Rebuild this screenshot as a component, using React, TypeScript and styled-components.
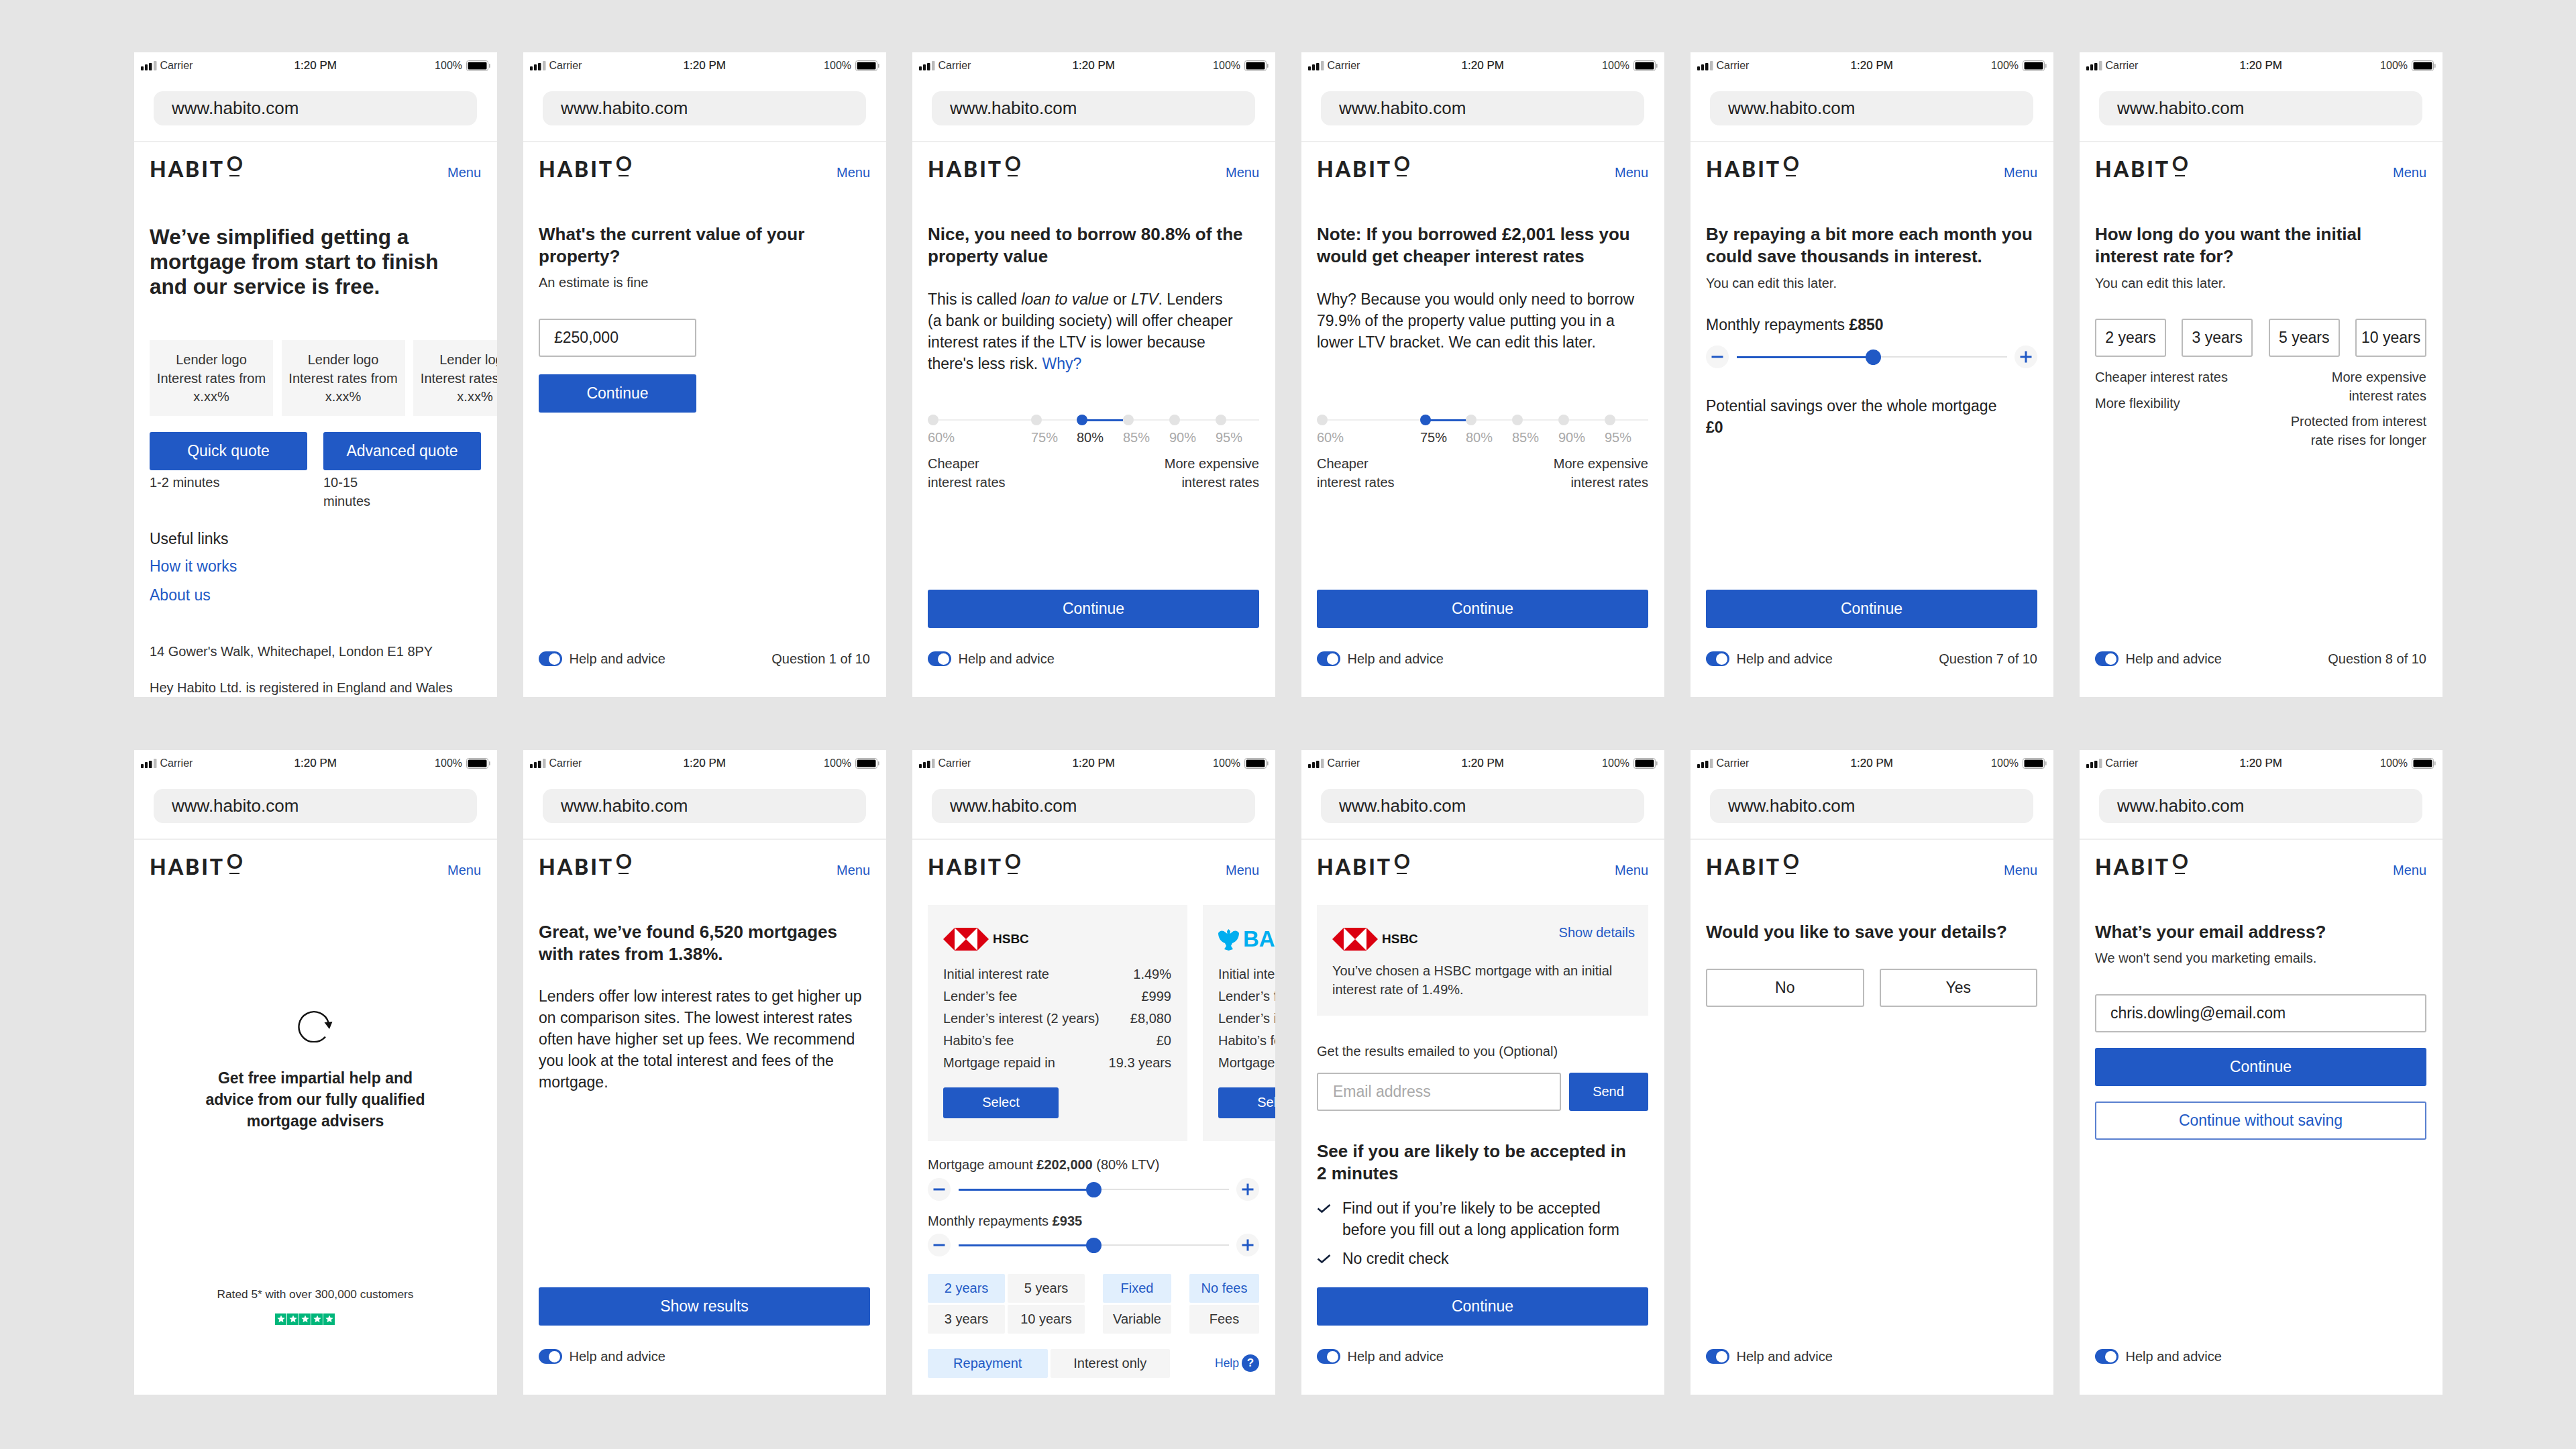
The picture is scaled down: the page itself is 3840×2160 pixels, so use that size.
import React from "react";
import styled, { createGlobalStyle } from "styled-components";

const BLUE = "#2159c5";
const INK = "#222";

const Global = createGlobalStyle`
  html, body { margin: 0; padding: 0; background: #e5e5e5; }
  body { font-family: "Liberation Sans", Arial, sans-serif; color: ${INK}; }
  * { box-sizing: border-box; }
`;

const Board = styled.div`
  display: grid;
  grid-template-columns: repeat(6, 541px);
  grid-auto-rows: 961px;
  column-gap: 39px;
  row-gap: 79px;
  padding: 78px 199px 81px 200px;
  width: 3840px;
  height: 2160px;
  overflow: hidden;
  background: #e5e5e5;
`;

const ScreenFrame = styled.section`
  display: flex;
  flex-direction: column;
  background: #fff;
  overflow: hidden;
`;

/* ---------- phone chrome ---------- */
const StatusBar = styled.div`
  display: grid;
  grid-template-columns: 1fr auto 1fr;
  align-items: center;
  height: 40px;
  padding: 0 10px 0 9.5px;
  font-size: 16px;
  color: #333;
`;
const StatusLeft = styled.div`
  display: flex;
  align-items: center;
  gap: 5px;
`;
const StatusRight = styled.div`
  display: flex;
  align-items: center;
  justify-content: flex-end;
  gap: 6px;
`;
const Clock = styled.div`
  font-size: 17px;
  color: #222;
  -webkit-text-stroke: 0.2px #222;
`;
const UrlWrap = styled.div`
  padding: 18px 30px 23px 29px;
  border-bottom: 2px solid #eee;
`;
const UrlBar = styled.div`
  height: 51px;
  display: flex;
  align-items: center;
  padding-left: 27px;
  border-radius: 14px;
  background: #f0f0f0;
  font-size: 26px;
  color: #222;
`;
const Header = styled.header`
  height: 68px;
  display: flex;
  justify-content: space-between;
  align-items: flex-start;
  padding: 21px 24px 0 23px;
`;
const Logo = styled.div`
  display: flex;
  align-items: flex-end;
  height: 30px;
  gap: 4px;
  font-family: "Lato", "Liberation Sans", sans-serif;
  font-weight: 900;
  color: #222;
`;
const LogoWord = styled.span`
  font-size: 32px;
  line-height: 23px;
  letter-spacing: 2.9px;
`;
const LogoO = styled.span`
  display: flex;
  flex-direction: column;
  align-items: center;
  width: 22px;
  font-size: 30px;
  line-height: 20px;
  font-weight: 700;
  &::after {
    content: "";
    width: 15px;
    height: 2.5px;
    margin-top: 8px;
    background: #222;
  }
`;
const MenuLink = styled.a`
  margin-top: 12px;
  font-size: 20px;
  line-height: 24px;
  color: ${BLUE};
`;

const Main = styled.main`
  flex: 1;
  min-height: 0;
  display: flex;
  flex-direction: column;
  padding: 0 24px 0 23px;
`;

/* ---------- text ---------- */
const Hero = styled.h1<{ $mt: number }>`
  margin: ${(p) => p.$mt}px 0 0;
  font-size: 31.5px;
  line-height: 37px;
  font-weight: 700;
  color: ${INK};
`;
const Heading = styled.h2<{ $mt?: number }>`
  margin: ${(p) => p.$mt ?? 52.5}px 0 0;
  font-size: 26px;
  line-height: 33px;
  font-weight: 700;
  color: ${INK};
`;
const Small = styled.p<{ $mt?: number; $right?: boolean; $center?: boolean }>`
  margin: ${(p) => p.$mt ?? 0}px 0 0;
  font-size: 20px;
  line-height: 27.5px;
  color: #333;
  text-align: ${(p) => (p.$right ? "right" : p.$center ? "center" : "left")};
`;
const Body = styled.p<{ $mt?: number; $minH?: number }>`
  margin: ${(p) => p.$mt ?? 0}px 0 0;
  font-size: 23px;
  line-height: 32px;
  color: ${INK};
  min-height: ${(p) => p.$minH ?? 0}px;
`;
const TextLink = styled.a`
  color: ${BLUE};
`;

/* ---------- buttons / inputs ---------- */
const Primary = styled.button<{ $mt?: number; $w?: string; $h?: number; $size?: number }>`
  display: block;
  margin: ${(p) => p.$mt ?? 0}px 0 0;
  width: ${(p) => p.$w ?? "100%"};
  height: ${(p) => p.$h ?? 57}px;
  flex-shrink: 0;
  border: 0;
  border-radius: 3px;
  background: ${BLUE};
  color: #fff;
  font-family: inherit;
  font-size: ${(p) => p.$size ?? 23}px;
  padding: 0;
`;
const OutlineBlue = styled(Primary)`
  background: #fff;
  color: ${BLUE};
  border: 2px solid #5a80d0;
`;
const Choice = styled.button`
  height: 57px;
  border: 2px solid #bbb;
  border-radius: 3px;
  background: #fff;
  font-family: inherit;
  font-size: 23px;
  color: ${INK};
  padding: 0;
`;
const ChoiceRow = styled.div<{ $cols: number; $gap: number; $mt: number }>`
  display: grid;
  grid-template-columns: repeat(${(p) => p.$cols}, 1fr);
  gap: ${(p) => p.$gap}px;
  margin-top: ${(p) => p.$mt}px;
`;
const TextField = styled.div<{ $mt?: number; $w?: string; $muted?: boolean; $pad?: number }>`
  display: flex;
  align-items: center;
  margin-top: ${(p) => p.$mt ?? 0}px;
  width: ${(p) => p.$w ?? "100%"};
  height: 57px;
  padding-left: ${(p) => p.$pad ?? 21}px;
  border: 2px solid #bbb;
  border-radius: 3px;
  font-size: 23px;
  color: ${(p) => (p.$muted ? "#a9a9a9" : INK)};
`;

/* ---------- footer ---------- */
const Footer = styled.footer`
  margin-top: auto;
  padding-bottom: 45px;
`;
const HelpRow = styled.div`
  display: flex;
  align-items: center;
  justify-content: space-between;
  height: 24px;
  margin-top: 34px;
  font-size: 20px;
  color: #333;
`;
const HelpLeft = styled.div`
  display: flex;
  align-items: center;
  gap: 10.5px;
`;
const Toggle = styled.span`
  position: relative;
  display: block;
  width: 35px;
  height: 22px;
  border-radius: 11px;
  background: ${BLUE};
  &::after {
    content: "";
    position: absolute;
    top: 2.5px;
    right: 3px;
    width: 17px;
    height: 17px;
    border-radius: 50%;
    background: #fff;
  }
`;

function BottomBar({ label, question }: { label?: string; question?: string }) {
  return (
    <Footer>
      {label && <Primary>{label}</Primary>}
      <HelpRow>
        <HelpLeft>
          <Toggle />
          Help and advice
        </HelpLeft>
        {question && <span>{question}</span>}
      </HelpRow>
    </Footer>
  );
}

/* ---------- chrome wrapper ---------- */
function Signal() {
  return (
    <svg width="24" height="14" viewBox="0 0 24 14">
      <rect x="0" y="8" width="4" height="6" rx="1" fill="#111" />
      <rect x="6" y="5" width="4" height="9" rx="1" fill="#111" />
      <rect x="12" y="3" width="4.5" height="11" rx="1" fill="#111" />
      <rect x="19" y="0" width="4.5" height="14" rx="1" fill="#bbb" />
    </svg>
  );
}
function Battery() {
  return (
    <svg width="36" height="16" viewBox="0 0 36 16">
      <rect x="0.5" y="0.5" width="32" height="15" rx="3" fill="#fff" stroke="#aaa" />
      <rect x="2.5" y="2.5" width="28" height="11" rx="1.5" fill="#000" />
      <rect x="34" y="5" width="1.6" height="6" rx="0.8" fill="#aaa" />
    </svg>
  );
}

function Screen({ children }: { children: React.ReactNode }) {
  return (
    <ScreenFrame>
      <StatusBar>
        <StatusLeft>
          <Signal />
          Carrier
        </StatusLeft>
        <Clock>1:20 PM</Clock>
        <StatusRight>
          100%
          <Battery />
        </StatusRight>
      </StatusBar>
      <UrlWrap>
        <UrlBar>www.habito.com</UrlBar>
      </UrlWrap>
      <Header>
        <Logo>
          <LogoWord>HABIT</LogoWord>
          <LogoO>O</LogoO>
        </Logo>
        <MenuLink>Menu</MenuLink>
      </Header>
      <Main>{children}</Main>
    </ScreenFrame>
  );
}

/* ---------- LTV ticks ---------- */
const Ticks = styled.div`
  position: relative;
  display: grid;
  grid-template-columns: 154px 68px 69px 69px 69px 1fr;
  margin-top: 60px;
  &::before {
    content: "";
    position: absolute;
    left: 0;
    right: 0;
    top: 7px;
    height: 2px;
    background: #eee;
  }
`;
const Tick = styled.div<{ $on: boolean }>`
  position: relative;
  font-size: 20px;
  line-height: 27.5px;
  color: ${(p) => (p.$on ? "#333" : "#a9a9a9")};
  &::after {
    content: "";
    display: ${(p) => (p.$on ? "block" : "none")};
    position: absolute;
    left: 8px;
    top: 6.5px;
    width: 61px;
    height: 3px;
    background: ${BLUE};
  }
`;
const TickDot = styled.span<{ $on: boolean }>`
  position: relative;
  display: block;
  width: 16px;
  height: 16px;
  margin-bottom: 5px;
  border-radius: 50%;
  background: ${(p) => (p.$on ? BLUE : "#e3e3e3")};
`;
const CaptionRow = styled.div<{ $mt?: number }>`
  display: flex;
  justify-content: space-between;
  margin-top: ${(p) => p.$mt ?? 11.5}px;
`;

function LtvTicks({ active }: { active: string }) {
  return (
    <>
      <Ticks>
        {["60%", "75%", "80%", "85%", "90%", "95%"].map((t) => (
          <Tick key={t} $on={t === active}>
            <TickDot $on={t === active} />
            {t}
          </Tick>
        ))}
      </Ticks>
      <CaptionRow>
        <Small>
          Cheaper
          <br />
          interest rates
        </Small>
        <Small $right>
          More expensive
          <br />
          interest rates
        </Small>
      </CaptionRow>
    </>
  );
}

/* ---------- slider ---------- */
const SliderRow = styled.div<{ $mt: number }>`
  display: flex;
  align-items: center;
  gap: 11.5px;
  height: 34px;
  margin-top: ${(p) => p.$mt}px;
`;
const Stepper = styled.span`
  display: flex;
  align-items: center;
  justify-content: center;
  flex-shrink: 0;
  width: 34px;
  height: 34px;
  border-radius: 50%;
  background: #f5f5f5;
`;
const Track = styled.div`
  position: relative;
  flex: 1;
  height: 2px;
  background: #e2e2e2;
`;
const Fill = styled.div`
  position: absolute;
  left: 0;
  top: -0.5px;
  height: 3px;
  background: ${BLUE};
`;
const Knob = styled.div`
  position: absolute;
  top: -10.5px;
  width: 23px;
  height: 23px;
  margin-left: -11.5px;
  border-radius: 50%;
  background: ${BLUE};
`;

function Slider({ pct, mt }: { pct: number; mt: number }) {
  return (
    <SliderRow $mt={mt}>
      <Stepper>
        <svg width="18" height="4" viewBox="0 0 18 4">
          <rect x="0.5" y="0.5" width="17" height="3" fill={BLUE} />
        </svg>
      </Stepper>
      <Track>
        <Fill style={{ width: `${pct}%` }} />
        <Knob style={{ left: `${pct}%` }} />
      </Track>
      <Stepper>
        <svg width="18" height="18" viewBox="0 0 18 18">
          <rect x="0.5" y="7.5" width="17" height="3" fill={BLUE} />
          <rect x="7.5" y="0.5" width="3" height="17" fill={BLUE} />
        </svg>
      </Stepper>
    </SliderRow>
  );
}

/* ---------- lender parts ---------- */
const LogoRow = styled.div`
  display: flex;
  align-items: center;
  gap: 6px;
  height: 34px;
`;
const LenderName = styled.span`
  font-size: 19px;
  font-weight: 700;
  color: #111;
`;
const BrandName = styled.span`
  font-size: 33px;
  font-weight: 700;
  color: #00aeef;
`;
function HsbcLogo() {
  return (
    <LogoRow>
      <svg width="68" height="34" viewBox="0 0 68 34">
        <rect x="17" width="34" height="34" fill="#fff" />
        <path d="M0 17 17 0v34zM68 17 51 0v34zM17 0h34L34 17zM17 34h34L34 17z" fill="#db0011" />
      </svg>
      <LenderName>HSBC</LenderName>
    </LogoRow>
  );
}
function BarclaysLogo() {
  return (
    <LogoRow>
      <svg width="31" height="33" viewBox="0 0 31 33">
        <path
          d="M15.5 1 18 4l-.5 4L20 6c4-4 9-3 11 1 0 7-4 13-10 15l-2 4 3 5-6.5 2L9 31l3-5-2-4C4 20 0 14 0 7c2-4 7-5 11-1l2.5 2L13 4z"
          fill="#00aeef"
        />
      </svg>
      <BrandName>BARCLAYS</BrandName>
    </LogoRow>
  );
}

const CardsRow = styled.div<{ $gap: number; $mt: number }>`
  display: flex;
  gap: ${(p) => p.$gap}px;
  margin-top: ${(p) => p.$mt}px;
`;
const LenderTile = styled.div`
  flex: 0 0 184px;
  height: 113px;
  padding-top: 16px;
  background: #f5f5f5;
  text-align: center;
  font-size: 20px;
  line-height: 27.5px;
  color: #333;
`;
const ProductCard = styled.article`
  flex: 0 0 387px;
  padding: 34px 24px 34px 23px;
  background: #f5f5f5;
`;
const RateTable = styled.dl`
  margin: 18.5px 0 20px;
`;
const RateRow = styled.div`
  display: flex;
  justify-content: space-between;
  white-space: nowrap;
  font-size: 20px;
  line-height: 33px;
  color: #333;
`;
const RateName = styled.dt``;
const RateValue = styled.dd`
  margin: 0;
`;

const rates = [
  ["Initial interest rate", "1.49%"],
  ["Lender’s fee", "£999"],
  ["Lender’s interest (2 years)", "£8,080"],
  ["Habito’s fee", "£0"],
  ["Mortgage repaid in", "19.3 years"],
];

function Product({ logo }: { logo: React.ReactNode }) {
  return (
    <ProductCard>
      {logo}
      <RateTable>
        {rates.map(([n, v]) => (
          <RateRow key={n}>
            <RateName>{n}</RateName>
            <RateValue>{v}</RateValue>
          </RateRow>
        ))}
      </RateTable>
      <Primary $w="172px" $h={46} $size={20}>
        Select
      </Primary>
    </ProductCard>
  );
}

/* ---------- filters ---------- */
const FilterRow = styled.div`
  display: flex;
  justify-content: space-between;
  margin-top: 25.5px;
`;
const FilterGroup = styled.div<{ $cols: number; $w: number }>`
  display: grid;
  grid-template-columns: repeat(${(p) => p.$cols}, 1fr);
  width: ${(p) => p.$w}px;
  column-gap: 4px;
  row-gap: 3px;
`;
const Chip = styled.div<{ $on?: boolean }>`
  display: flex;
  align-items: center;
  justify-content: center;
  height: 43px;
  font-size: 20px;
  border-radius: 2px;
  background: ${(p) => (p.$on ? "#e1effd" : "#f5f5f5")};
  color: ${(p) => (p.$on ? BLUE : "#333")};
`;
const TypeRow = styled.div`
  display: flex;
  align-items: center;
  justify-content: space-between;
  margin-top: 23px;
`;
const HelpLink = styled.div`
  display: flex;
  align-items: center;
  gap: 4px;
  font-size: 17.5px;
  color: ${BLUE};
`;
const HelpBadge = styled.span`
  display: flex;
  align-items: center;
  justify-content: center;
  width: 26px;
  height: 26px;
  border-radius: 50%;
  background: ${BLUE};
  color: #fff;
  font-size: 17px;
  font-weight: 700;
`;

/* ---------- loading ---------- */
const Spinner = styled.div`
  align-self: center;
  margin-top: 186px;
  height: 48px;
`;
const LoadingTitle = styled.h2`
  margin: 36.5px 0 0;
  font-size: 23px;
  line-height: 32px;
  font-weight: 700;
  text-align: center;
  color: ${INK};
`;
const Rated = styled.p`
  margin: 230px 0 0;
  font-size: 17.3px;
  line-height: 24px;
  text-align: center;
  color: #333;
`;
const Stars = styled.div`
  align-self: center;
  display: flex;
  gap: 1.5px;
  margin: 17px 31px 0 0;
`;
const StarBox = styled.span`
  display: flex;
  align-items: center;
  justify-content: center;
  width: 16.5px;
  height: 17px;
  background: #00b67a;
`;

/* ---------- summary + checklist ---------- */
const SummaryCard = styled.div`
  margin-top: 29px;
  padding: 34px 20px 25px 23px;
  background: #f5f5f5;
`;
const SummaryTop = styled.div`
  display: flex;
  justify-content: space-between;
  align-items: flex-start;
`;
const ShowDetails = styled.a`
  margin-top: -6px;
  font-size: 20px;
  line-height: 27.5px;
  color: ${BLUE};
`;
const EmailRow = styled.div`
  display: flex;
  gap: 11.5px;
  margin-top: 17px;
`;
const CheckRow = styled.div<{ $mt: number }>`
  display: flex;
  margin-top: ${(p) => p.$mt}px;
  font-size: 23px;
  line-height: 32px;
  color: ${INK};
`;
const CheckMark = styled.span`
  display: flex;
  align-items: flex-start;
  flex: 0 0 38px;
  padding-top: 9px;
`;
const LinkList = styled.div``;
const BoldValue = styled.b`
  font-weight: 700;
`;

function Check() {
  return (
    <svg width="21" height="15" viewBox="0 0 21 15">
      <path d="M1.5 7.5 7.5 12.5 19.5 2" fill="none" stroke="#12203a" strokeWidth="2.6" />
    </svg>
  );
}

export default function App() {
  return (
    <>
      <Global />
      <Board>
        {/* 1 */}
        <Screen>
          <Hero $mt={54.5}>
            We’ve simplified getting a<br />
            mortgage from start to finish
            <br />
            and our service is free.
          </Hero>
          <CardsRow $gap={12.5} $mt={61.5}>
            {[0, 1, 2].map((i) => (
              <LenderTile key={i}>
                Lender logo
                <br />
                Interest rates from
                <br />
                x.xx%
              </LenderTile>
            ))}
          </CardsRow>
          <ChoiceRow $cols={2} $gap={24} $mt={24}>
            <Primary>Quick quote</Primary>
            <Primary>Advanced quote</Primary>
          </ChoiceRow>
          <ChoiceRow $cols={2} $gap={24} $mt={5}>
            <Small>1-2 minutes</Small>
            <Small>
              10-15
              <br />
              minutes
            </Small>
          </ChoiceRow>
          <Body $mt={26}>Useful links</Body>
          <LinkList>
            <Body $mt={11}>
              <TextLink>How it works</TextLink>
            </Body>
            <Body $mt={11}>
              <TextLink>About us</TextLink>
            </Body>
          </LinkList>
          <Small $mt={55}>14 Gower's Walk, Whitechapel, London E1 8PY</Small>
          <Small $mt={26}>Hey Habito Ltd. is registered in England and Wales</Small>
        </Screen>

        {/* 2 */}
        <Screen>
          <Heading>
            What's the current value of your
            <br />
            property?
          </Heading>
          <Small $mt={9.5}>An estimate is fine</Small>
          <TextField $mt={39.5} $w="235px">
            £250,000
          </TextField>
          <Primary $mt={26} $w="235px">
            Continue
          </Primary>
          <BottomBar question="Question 1 of 10" />
        </Screen>

        {/* 3 */}
        <Screen>
          <Heading>
            Nice, you need to borrow 80.8% of the
            <br />
            property value
          </Heading>
          <Body $mt={31.5} $minH={128}>
            This is called <i>loan to value</i> or <i>LTV</i>. Lenders
            <br />
            (a bank or building society) will offer cheaper
            <br />
            interest rates if the LTV is lower because
            <br />
            there's less risk. <TextLink>Why?</TextLink>
          </Body>
          <LtvTicks active="80%" />
          <BottomBar label="Continue" />
        </Screen>

        {/* 4 */}
        <Screen>
          <Heading>
            Note: If you borrowed £2,001 less you
            <br />
            would get cheaper interest rates
          </Heading>
          <Body $mt={31.5} $minH={128}>
            Why? Because you would only need to borrow
            <br />
            79.9% of the property value putting you in a
            <br />
            lower LTV bracket. We can edit this later.
          </Body>
          <LtvTicks active="75%" />
          <BottomBar label="Continue" />
        </Screen>

        {/* 5 */}
        <Screen>
          <Heading>
            By repaying a bit more each month you
            <br />
            could save thousands in interest.
          </Heading>
          <Small $mt={10}>You can edit this later.</Small>
          <Body $mt={32}>
            Monthly repayments <BoldValue>£850</BoldValue>
          </Body>
          <Slider pct={50.5} mt={15} />
          <Body $mt={40}>
            Potential savings over the whole mortgage
            <br />
            <BoldValue>£0</BoldValue>
          </Body>
          <BottomBar label="Continue" question="Question 7 of 10" />
        </Screen>

        {/* 6 */}
        <Screen>
          <Heading>
            How long do you want the initial
            <br />
            interest rate for?
          </Heading>
          <Small $mt={10}>You can edit this later.</Small>
          <ChoiceRow $cols={4} $gap={23.5} $mt={39}>
            <Choice>2 years</Choice>
            <Choice>3 years</Choice>
            <Choice>5 years</Choice>
            <Choice>10 years</Choice>
          </ChoiceRow>
          <CaptionRow $mt={17}>
            <div>
              <Small>Cheaper interest rates</Small>
              <Small $mt={11.5}>More flexibility</Small>
            </div>
            <div>
              <Small $right>
                More expensive
                <br />
                interest rates
              </Small>
              <Small $right $mt={11}>
                Protected from interest
                <br />
                rate rises for longer
              </Small>
            </div>
          </CaptionRow>
          <BottomBar question="Question 8 of 10" />
        </Screen>

        {/* 7 */}
        <Screen>
          <Spinner>
            <svg width="52" height="48" viewBox="0 0 52 48">
              <path
                d="M41 39.5A22.5 22.5 0 1 1 45.5 18"
                fill="none"
                stroke="#111"
                strokeWidth="2.4"
              />
              <path d="M39.5 18 51.5 17 47 28z" fill="#111" />
            </svg>
          </Spinner>
          <LoadingTitle>
            Get free impartial help and
            <br />
            advice from our fully qualified
            <br />
            mortgage advisers
          </LoadingTitle>
          <Rated>Rated 5* with over 300,000 customers</Rated>
          <Stars>
            {[0, 1, 2, 3, 4].map((i) => (
              <StarBox key={i}>
                <svg width="12" height="12" viewBox="0 0 24 24">
                  <path d="M12 1l3.2 7.6 8.2.7-6.2 5.4 1.9 8L12 18.4l-7.1 4.3 1.9-8L.6 9.3l8.2-.7z" fill="#fff" />
                </svg>
              </StarBox>
            ))}
          </Stars>
        </Screen>

        {/* 8 */}
        <Screen>
          <Heading>
            Great, we’ve found 6,520 mortgages
            <br />
            with rates from 1.38%.
          </Heading>
          <Body $mt={30}>
            Lenders offer low interest rates to get higher up
            <br />
            on comparison sites. The lowest interest rates
            <br />
            often have higher set up fees. We recommend
            <br />
            you look at the total interest and fees of the
            <br />
            mortgage.
          </Body>
          <BottomBar label="Show results" />
        </Screen>

        {/* 9 */}
        <Screen>
          <CardsRow $gap={23} $mt={29}>
            <Product logo={<HsbcLogo />} />
            <Product logo={<BarclaysLogo />} />
          </CardsRow>
          <Small $mt={22.5}>
            Mortgage amount <BoldValue>£202,000</BoldValue> (80% LTV)
          </Small>
          <Slider pct={50} mt={5.5} />
          <Small $mt={16.5}>
            Monthly repayments <BoldValue>£935</BoldValue>
          </Small>
          <Slider pct={50} mt={5} />
          <FilterRow>
            <FilterGroup $cols={2} $w={234}>
              <Chip $on>2 years</Chip>
              <Chip>5 years</Chip>
              <Chip>3 years</Chip>
              <Chip>10 years</Chip>
            </FilterGroup>
            <FilterGroup $cols={1} $w={102}>
              <Chip $on>Fixed</Chip>
              <Chip>Variable</Chip>
            </FilterGroup>
            <FilterGroup $cols={1} $w={104}>
              <Chip $on>No fees</Chip>
              <Chip>Fees</Chip>
            </FilterGroup>
          </FilterRow>
          <TypeRow>
            <FilterGroup $cols={2} $w={361}>
              <Chip $on>Repayment</Chip>
              <Chip>Interest only</Chip>
            </FilterGroup>
            <HelpLink>
              Help
              <HelpBadge>?</HelpBadge>
            </HelpLink>
          </TypeRow>
        </Screen>

        {/* 10 */}
        <Screen>
          <SummaryCard>
            <SummaryTop>
              <HsbcLogo />
              <ShowDetails>Show details</ShowDetails>
            </SummaryTop>
            <Small $mt={17}>
              You’ve chosen a HSBC mortgage with an initial
              <br />
              interest rate of 1.49%.
            </Small>
          </SummaryCard>
          <Small $mt={40}>Get the results emailed to you (Optional)</Small>
          <EmailRow>
            <TextField $w="364px" $muted $pad={22}>
              Email address
            </TextField>
            <Primary $w="118px" $size={20}>
              Send
            </Primary>
          </EmailRow>
          <Heading $mt={44.5}>
            See if you are likely to be accepted in
            <br />2 minutes
          </Heading>
          <CheckRow $mt={18.5}>
            <CheckMark>
              <Check />
            </CheckMark>
            <span>
              Find out if you’re likely to be accepted
              <br />
              before you fill out a long application form
            </span>
          </CheckRow>
          <CheckRow $mt={11}>
            <CheckMark>
              <Check />
            </CheckMark>
            <span>No credit check</span>
          </CheckRow>
          <BottomBar label="Continue" />
        </Screen>

        {/* 11 */}
        <Screen>
          <Heading>Would you like to save your details?</Heading>
          <ChoiceRow $cols={2} $gap={23} $mt={38.5}>
            <Choice>No</Choice>
            <Choice>Yes</Choice>
          </ChoiceRow>
          <BottomBar />
        </Screen>

        {/* 12 */}
        <Screen>
          <Heading>What’s your email address?</Heading>
          <Small $mt={9}>We won't send you marketing emails.</Small>
          <TextField $mt={40}>chris.dowling@email.com</TextField>
          <Primary $mt={23}>Continue</Primary>
          <OutlineBlue $mt={23}>Continue without saving</OutlineBlue>
          <BottomBar />
        </Screen>
      </Board>
    </>
  );
}
